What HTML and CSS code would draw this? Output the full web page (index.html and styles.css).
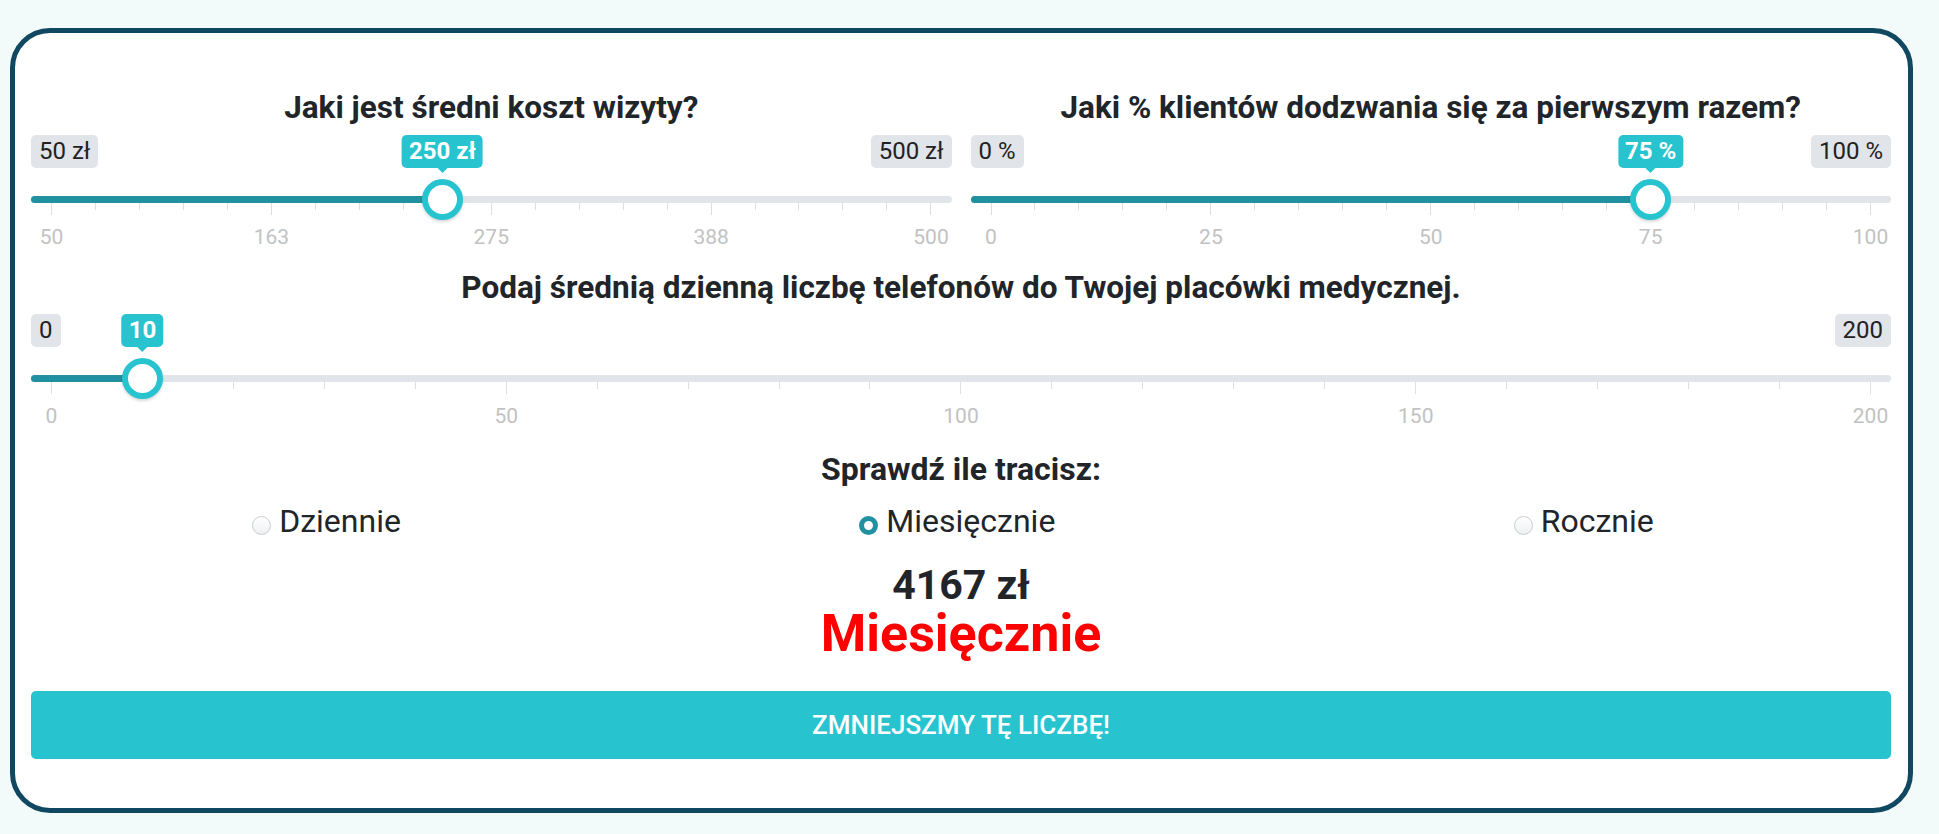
FILE: index.html
```html
<!DOCTYPE html>
<html lang="pl">
<head>
    <meta charset="UTF-8">
    <meta name="viewport" content="width=device-width, initial-scale=1.0">
    <title>Kalkulator strat</title>
    <link rel="stylesheet" href="styles.css">
</head>
<body>
    <div class="kalkulator">
        <div class="rzad">
            <div class="kolumna">
                <h3 class="pytanie">Jaki jest średni koszt wizyty?</h3>
                <div class="suwak" style="--p: 0.4444">
                    <div class="suwak-gora"><span class="skraj">50 zł</span><span class="skraj">500 zł</span></div>
                    <div class="suwak-tor">
                        <div class="linia"><div class="pasek"></div></div>
                        <div class="uchwyt"><span class="wartosc">250 zł</span></div>
                    </div>
                    <div class="kreski">
                        <i class="duza"></i><i></i><i></i><i></i><i></i><i class="duza"></i><i></i><i></i><i></i><i></i><i class="duza"></i><i></i><i></i><i></i><i></i><i class="duza"></i><i></i><i></i><i></i><i></i><i class="duza"></i>
                    </div>
                    <div class="podzialka"><span>50</span><span>163</span><span>275</span><span>388</span><span>500</span></div>
                </div>
            </div>
            <div class="kolumna">
                <h3 class="pytanie">Jaki % klientów dodzwania się za pierwszym razem?</h3>
                <div class="suwak" style="--p: 0.75">
                    <div class="suwak-gora"><span class="skraj">0 %</span><span class="skraj">100 %</span></div>
                    <div class="suwak-tor">
                        <div class="linia"><div class="pasek"></div></div>
                        <div class="uchwyt"><span class="wartosc">75 %</span></div>
                    </div>
                    <div class="kreski">
                        <i class="duza"></i><i></i><i></i><i></i><i></i><i class="duza"></i><i></i><i></i><i></i><i></i><i class="duza"></i><i></i><i></i><i></i><i></i><i class="duza"></i><i></i><i></i><i></i><i></i><i class="duza"></i>
                    </div>
                    <div class="podzialka"><span>0</span><span>25</span><span>50</span><span>75</span><span>100</span></div>
                </div>
            </div>
        </div>

        <h3 class="pytanie pytanie-szerokie">Podaj średnią dzienną liczbę telefonów do Twojej placówki medycznej.</h3>
        <div class="suwak" style="--p: 0.05">
            <div class="suwak-gora"><span class="skraj">0</span><span class="skraj">200</span></div>
            <div class="suwak-tor">
                <div class="linia"><div class="pasek"></div></div>
                <div class="uchwyt"><span class="wartosc">10</span></div>
            </div>
            <div class="kreski">
                <i class="duza"></i><i></i><i></i><i></i><i></i><i class="duza"></i><i></i><i></i><i></i><i></i><i class="duza"></i><i></i><i></i><i></i><i></i><i class="duza"></i><i></i><i></i><i></i><i></i><i class="duza"></i>
            </div>
            <div class="podzialka"><span>0</span><span>50</span><span>100</span><span>150</span><span>200</span></div>
        </div>

        <h3 class="sprawdz">Sprawdź ile tracisz:</h3>
        <div class="okresy">
            <label class="okres"><input type="radio" name="okres"> Dziennie</label>
            <label class="okres"><input type="radio" name="okres" checked> Miesięcznie</label>
            <label class="okres"><input type="radio" name="okres"> Rocznie</label>
        </div>

        <p class="suma">4167 zł</p>
        <p class="okres-wynik">Miesięcznie</p>

        <button class="przycisk">Zmniejszmy tę liczbę!</button>
    </div>
</body>
</html>
```

FILE: styles.css
```css
body {
    margin: 0;
    padding: 28px 26px 21px 10px;
    background: #f3fbfa;
    font-family: Roboto, "Liberation Sans", sans-serif;
    color: #212529;
}

.kalkulator {
    background: #fff;
    border: 5px solid #104862;
    border-radius: 40px;
    padding: 57px 17px 49px 16px;
}

.rzad {
    display: grid;
    grid-template-columns: 1fr 1fr;
    column-gap: 19px;
}

.pytanie {
    margin: 0;
    font-size: 31.5px;
    line-height: 36px;
    font-weight: 700;
    text-align: center;
}

.pytanie-szerokie {
    margin-top: 20px;
}

/* suwak */
.suwak {
    margin-top: 9px;
}

.pytanie-szerokie + .suwak {
    margin-top: 8px;
}

.suwak-gora {
    display: flex;
    justify-content: space-between;
}

.skraj {
    background: #e1e4e9;
    border-radius: 5px;
    padding: 1px 8px;
    font-size: 24px;
    line-height: 31px;
    color: #222;
}

.suwak-tor {
    position: relative;
    height: 24px;
    margin-top: 11px;
}

.linia {
    position: absolute;
    left: 0;
    right: 0;
    top: 17px;
    height: 7px;
    border-radius: 4px;
    background: #e1e4e9;
}

.pasek {
    height: 100%;
    border-radius: 4px 0 0 4px;
    background: #2190a0;
    width: calc(20.5px + (100% - 41px) * var(--p));
}

.uchwyt {
    position: absolute;
    top: 0;
    left: calc(20.5px + (100% - 41px) * var(--p));
    width: 41px;
    height: 41px;
    margin-left: -20.5px;
    box-sizing: border-box;
    border: 6px solid #27c4cf;
    border-radius: 50%;
    background: #fff;
    box-shadow: 0 2px 3px rgba(0, 0, 0, 0.15);
}

.wartosc {
    position: absolute;
    bottom: calc(100% + 17px);
    left: 50%;
    transform: translateX(-50%);
    background: #27c4cf;
    color: #fff;
    font-size: 24px;
    line-height: 31px;
    font-weight: 700;
    padding: 1px 7px;
    border-radius: 5px;
    white-space: nowrap;
}

.wartosc::after {
    content: "";
    position: absolute;
    top: 100%;
    left: 50%;
    margin-left: -5px;
    border: 5px solid transparent;
    border-top-color: #27c4cf;
    border-bottom: 0;
}

.kreski {
    display: flex;
    justify-content: space-between;
    align-items: flex-start;
    height: 12px;
    margin: 0 20px;
}

.kreski i {
    width: 1px;
    height: 7px;
    background: #dcdfe4;
}

.kreski i.duza {
    height: 12px;
}

.podzialka {
    display: flex;
    justify-content: space-between;
    margin: 10px 20.5px 0;
    font-size: 21px;
    line-height: 25px;
    color: #c2c2c2;
}

.podzialka span {
    width: 0;
    display: flex;
    justify-content: center;
    white-space: nowrap;
}

/* wynik */
.sprawdz {
    margin: 21px 0 0;
    font-size: 32px;
    line-height: 38px;
    font-weight: 700;
    text-align: center;
}

.okresy {
    display: flex;
    justify-content: space-around;
    margin: 14px 8px 0 -8px;
}

.okres {
    display: flex;
    align-items: center;
    gap: 8px;
    font-size: 32px;
    line-height: 38px;
}

.okres input {
    appearance: none;
    -webkit-appearance: none;
    margin: 9px 0 0;
    width: 19px;
    height: 19px;
    box-sizing: border-box;
    border: 1px solid #c9cdd2;
    border-radius: 50%;
    background: linear-gradient(#fff, #eef0f2);
}

.okres input:checked {
    border: 5px solid #2190a0;
    background: #fff;
}

.suma {
    margin: 22px 0 0;
    font-size: 41px;
    line-height: 46px;
    font-weight: 700;
    text-align: center;
}

.okres-wynik {
    margin: 0;
    font-size: 52px;
    line-height: 52px;
    font-weight: 700;
    color: #ff0000;
    text-align: center;
}

.przycisk {
    display: block;
    width: 100%;
    height: 68px;
    margin-top: 31px;
    border: none;
    border-radius: 5px;
    background: #27c4cf;
    color: #fff;
    font-family: Roboto, "Liberation Sans", sans-serif;
    font-size: 26px;
    font-weight: 500;
    text-transform: uppercase;
}
```
